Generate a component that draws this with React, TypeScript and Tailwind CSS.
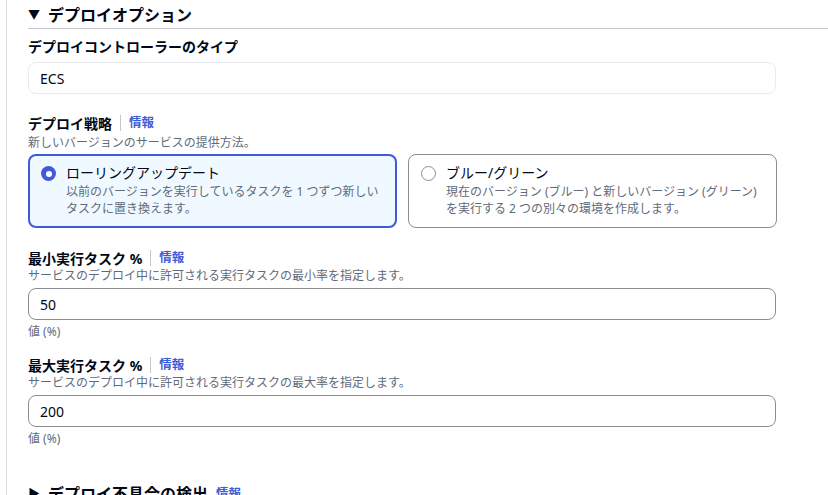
import React from "react";

function Info() {
  return (
    <>
      <span className="mx-2 h-4 w-px bg-[#c6c6cd]" />
      <a className="text-[12.5px] font-bold text-[#3f5bd9]">情報</a>
    </>
  );
}

function Radio({ checked }: { checked: boolean }) {
  return checked ? (
    <span className="mt-[3px] flex h-[15px] w-[15px] shrink-0 items-center justify-center rounded-full bg-[#3f5bd9]">
      <span className="h-[6px] w-[6px] rounded-full bg-white" />
    </span>
  ) : (
    <span className="mt-[3px] h-[15px] w-[15px] shrink-0 rounded-full border border-[#8c8c94] bg-white" />
  );
}

function NumberField({ label, desc, value }: { label: string; desc: string; value: string }) {
  return (
    <div>
      <div className="flex h-[20px] items-center">
        <span className="text-[14px] font-bold text-[#000716]">{label}</span>
        <Info />
      </div>
      <p className="text-[12px] leading-[16px] text-[#5f6b7a]">{desc}</p>
      <div className="mt-[4px] flex h-[32px] w-[748px] items-center rounded-[8px] border border-[#8c8c94] px-[11px] text-[14px] text-[#000716]">
        {value}
      </div>
      <p className="mt-[2px] text-[12px] leading-[20px] text-[#5f6b7a]">値 (%)</p>
    </div>
  );
}

export default function App() {
  return (
    <div
      className="flex h-[495px] w-[828px] overflow-hidden bg-white"
      style={{ fontFamily: '"Noto Sans", "Noto Sans CJK JP", sans-serif' }}
    >
      <div className="ml-[6px] w-px shrink-0 bg-[#dedee3]" />
      <div className="ml-[21px] flex-1">
        {/* header */}
        <div className="flex h-[29px] items-center gap-[8px] border-b border-[#c6c6cd] pt-[1px]">
          <span className="text-[12px] text-[#000716]">▼</span>
          <span className="text-[16px] font-bold text-[#000716]">デプロイオプション</span>
        </div>

        <div className="mt-[8px] text-[14px] font-bold leading-[20px] text-[#000716]">
          デプロイコントローラーのタイプ
        </div>
        <div className="mt-[5px] flex h-[32px] w-[748px] items-center rounded-[8px] border border-[#e9ebed] px-[11px] text-[14px] text-[#000716]">
          ECS
        </div>

        {/* strategy */}
        <div className="mt-[19px] flex h-[20px] items-center">
          <span className="text-[14px] font-bold text-[#000716]">デプロイ戦略</span>
          <Info />
        </div>
        <p className="mt-[2px] text-[12px] leading-[16px] text-[#5f6b7a]">新しいバージョンのサービスの提供方法。</p>
        <div className="mt-[3px] flex w-[749px] gap-[11px]">
          <div className="flex h-[74px] flex-1 gap-[10px] rounded-[8px] border-2 border-[#3f5bd9] bg-[#f0f9ff] px-[11px] pt-[7px]">
            <Radio checked />
            <div>
              <div className="text-[14px] leading-[20px] text-[#000716]">ローリングアップデート</div>
              <div className="text-[12px] leading-[17px] text-[#5f6b7a]">
                以前のバージョンを実行しているタスクを 1 つずつ新しい
                <br />
                タスクに置き換えます。
              </div>
            </div>
          </div>
          <div className="flex h-[74px] flex-1 gap-[10px] rounded-[8px] border border-[#8c8c94] px-[12px] pt-[8px]">
            <Radio checked={false} />
            <div>
              <div className="text-[14px] leading-[20px] text-[#000716]">ブルー/グリーン</div>
              <div className="text-[12px] leading-[17px] text-[#5f6b7a]">
                現在のバージョン (ブルー) と新しいバージョン (グリーン)
                <br />
                を実行する 2 つの別々の環境を作成します。
              </div>
            </div>
          </div>
        </div>

        <div className="mt-[20px] flex flex-col gap-[13px]">
          <NumberField
            label="最小実行タスク %"
            desc="サービスのデプロイ中に許可される実行タスクの最小率を指定します。"
            value="50"
          />
          <NumberField
            label="最大実行タスク %"
            desc="サービスのデプロイ中に許可される実行タスクの最大率を指定します。"
            value="200"
          />
        </div>

        <div className="mt-[33px] flex items-center gap-[8px]">
          <span className="text-[12px] text-[#000716]">▶</span>
          <span className="text-[16px] font-bold text-[#000716]">デプロイ不具合の検出</span>
          <a className="text-[12.5px] font-bold text-[#3f5bd9]">情報</a>
        </div>
      </div>
    </div>
  );
}
